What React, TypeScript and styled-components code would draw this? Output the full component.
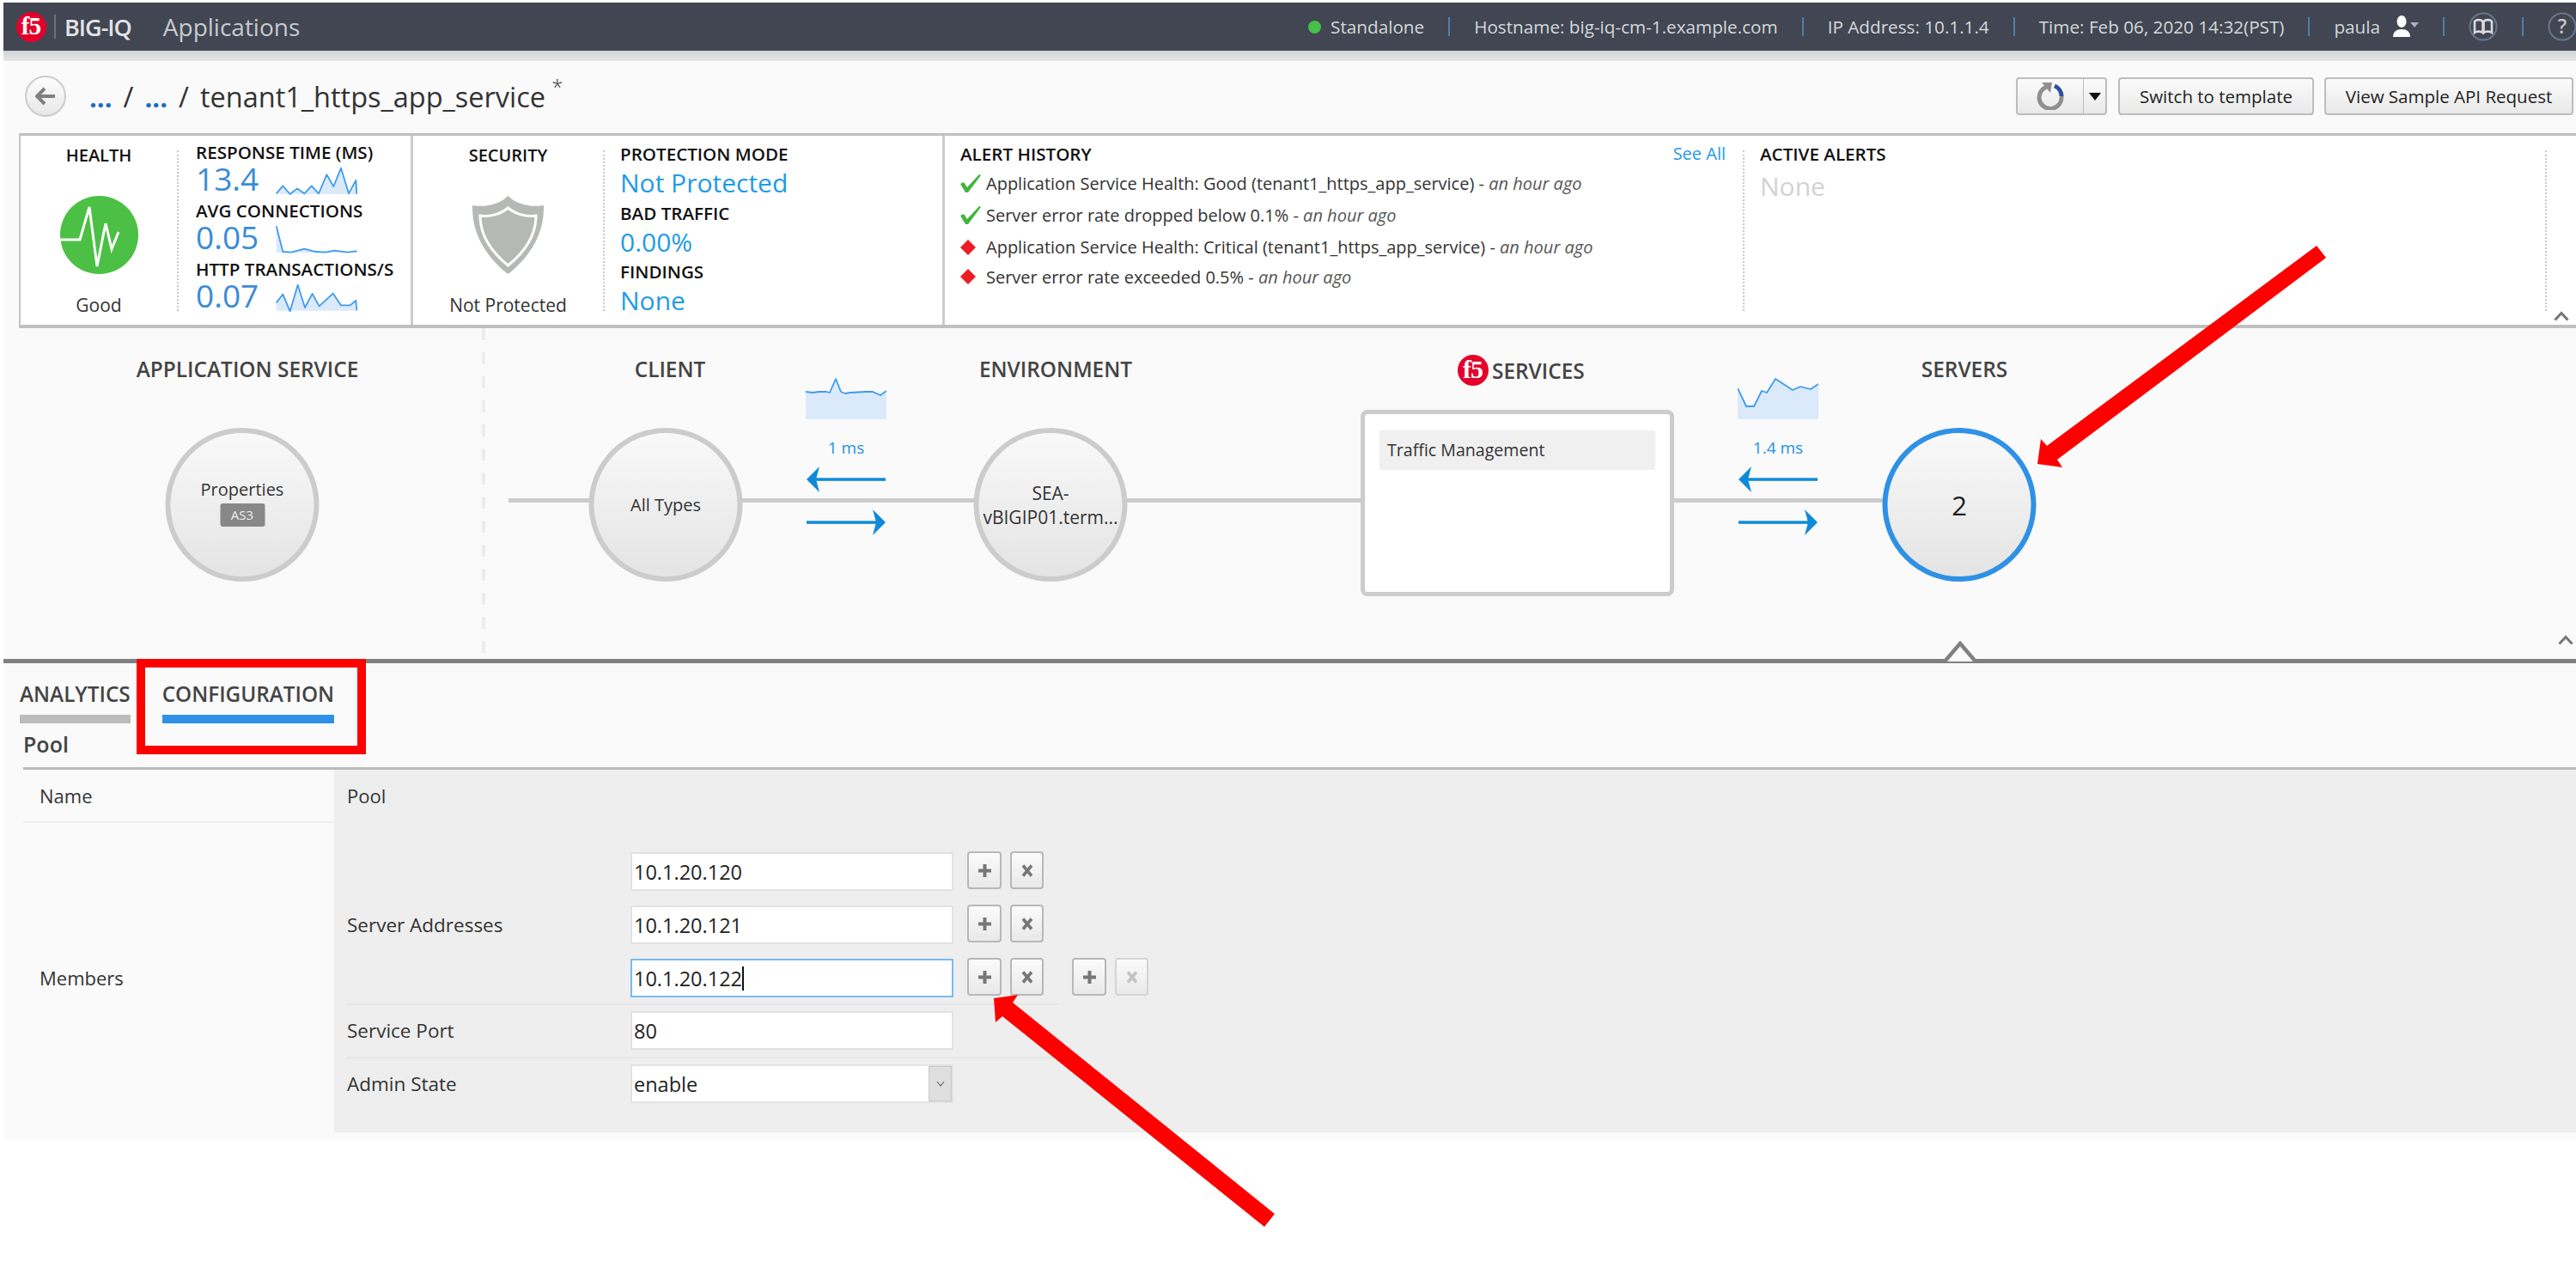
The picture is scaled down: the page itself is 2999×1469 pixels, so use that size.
import React from 'react';
import styled, { createGlobalStyle } from 'styled-components';

const GlobalStyle = createGlobalStyle`
  html, body {
    margin: 0;
    padding: 0;
    background: #ffffff;
  }
  body {
    font-family: "Open Sans", "Liberation Sans", sans-serif;
    color: #333333;
  }
  * {
    box-sizing: border-box;
  }
`;

const toPath = (pts: number[][]) => pts.map((p) => p.join(',')).join(' ');

const Spark = ({
  points,
  width,
  height,
  box,
  base,
}: {
  points: number[][];
  width: number;
  height: number;
  box: string;
  base: number;
}) => {
  const first = points[0][0];
  const last = points[points.length - 1][0];
  const area = [[first, base], ...points, [last, base]];
  return (
    <svg width={width} height={height} viewBox={box} preserveAspectRatio="none">
      <polygon points={toPath(area)} fill="#dbeafb" />
      <polyline
        points={toPath(points)}
        fill="none"
        stroke="#3d9bf0"
        strokeWidth={1.8}
        vectorEffect="non-scaling-stroke"
        strokeLinejoin="round"
      />
    </svg>
  );
};

const F5Logo = ({ size }: { size: number }) => (
  <svg width={size} height={size} viewBox="0 0 36 36">
    <circle cx="18" cy="18" r="18" fill="#e4002b" />
    <text
      x="17.5"
      y="27"
      textAnchor="middle"
      fontFamily="Liberation Serif, serif"
      fontWeight="700"
      fontSize="30"
      letterSpacing="-1"
      fill="#ffffff"
    >
      f5
    </text>
  </svg>
);

const responseSpark = [[32,110],[55,83],[80,112],[105,92],[130,110],[155,83],[180,110],[208,43],[232,85],[258,20],[285,110],[310,63],[313,112]];
const connectionSpark = [[32,222],[55,312],[85,314],[130,302],[170,312],[205,314],[235,308],[280,314],[310,310],[313,312]];
const transactionSpark = [[32,488],[55,458],[80,518],[107,425],[132,505],[158,456],[182,500],[230,455],[258,497],[290,497],[310,480],[313,515]];
const clientSpark = [[0,16],[8,17],[16,16],[24,16],[28,17],[35,1],[41,16],[46,18],[52,17],[70,16],[78,16],[87,20],[94,15]];
const serverSpark = [[0,12],[10,33],[19,33],[28,15],[34,17],[44,1],[64,14],[73,10],[85,13],[94,7]];

const metrics = [
  { label: 'RESPONSE TIME (MS)', value: '13.4', points: responseSpark, box: '30 15 285 100', base: 112 },
  { label: 'AVG CONNECTIONS', value: '0.05', points: connectionSpark, box: '30 218 285 100', base: 316 },
  { label: 'HTTP TRANSACTIONS/S', value: '0.07', points: transactionSpark, box: '30 420 285 100', base: 516 },
];

const protection = [
  { label: 'PROTECTION MODE', value: 'Not Protected' },
  { label: 'BAD TRAFFIC', value: '0.00%' },
  { label: 'FINDINGS', value: 'None' },
];

const alerts = [
  { ok: true, text: 'Application Service Health: Good (tenant1_https_app_service)' },
  { ok: true, text: 'Server error rate dropped below 0.1%' },
  { ok: false, text: 'Application Service Health: Critical (tenant1_https_app_service)' },
  { ok: false, text: 'Server error rate exceeded 0.5%' },
];

const PlusIcon = ({ faded }: { faded?: boolean }) => (
  <svg width="17" height="17" viewBox="0 0 17 17">
    <path d="M8.5 1v15M1 8.5h15" stroke={faded ? '#c4c4c4' : '#777777'} strokeWidth="4" />
  </svg>
);

const CrossIcon = ({ faded }: { faded?: boolean }) => (
  <svg width="14" height="15" viewBox="0 0 14 15">
    <path d="M2 1.5l10 12M12 1.5l-10 12" stroke={faded ? '#c4c4c4' : '#777777'} strokeWidth="3.6" />
  </svg>
);

const ArrowRow = () => (
  <ArrowStack>
    <svg width="92" height="32" viewBox="0 0 92 32">
      <path d="M0 16L15 1L11 16L15 31Z" fill="#0f8ad9" />
      <rect x="8" y="14.300" width="84" height="3.500" fill="#0f8ad9" />
    </svg>
    <svg width="92" height="32" viewBox="0 0 92 32">
      <path d="M92 16L77 1L81 16L77 31Z" fill="#0f8ad9" />
      <rect x="0" y="14.300" width="84" height="3.500" fill="#0f8ad9" />
    </svg>
  </ArrowStack>
);

const App = () => (
  <Page>
    <GlobalStyle />
    <NavBar>
      <LogoSlot>
        <F5Logo size={35} />
      </LogoSlot>
      <LogoRule />
      <Brand>BIG-IQ</Brand>
      <Section>Applications</Section>
      <NavRight>
        <StatusDot />
        <NavText>Standalone</NavText>
        <NavRule />
        <NavText>Hostname: big-iq-cm-1.example.com</NavText>
        <NavRule />
        <NavText>IP Address: 10.1.1.4</NavText>
        <NavRule />
        <NavText>Time: Feb 06, 2020 14:32(PST)</NavText>
        <NavRule />
        <NavText>paula</NavText>
        <UserSlot>
          <svg width="30" height="28" viewBox="0 0 30 28">
            <ellipse cx="10" cy="8" rx="5.5" ry="7" fill="#ffffff" />
            <path d="M0 26c0-6 4-9 10-9s10 3 10 9z" fill="#ffffff" />
            <path d="M20 9h10l-5 6z" fill="#aab0b8" />
          </svg>
        </UserSlot>
        <NavRule />
        <IconSlot>
          <svg width="34" height="34" viewBox="0 0 34 34">
            <circle cx="17" cy="17" r="15.5" fill="none" stroke="#66778c" strokeWidth="2" />
            <path
              d="M7 24V11c2-2.500 7-2.500 9.500 0v13c-2.500-1.800-7-1.800-9.500 0zM27 24V11c-2-2.500-7-2.500-9.500 0v13c2.500-1.800 7-1.800 9.500 0z"
              fill="none"
              stroke="#d8dadd"
              strokeWidth="2.600"
            />
          </svg>
        </IconSlot>
        <NavRule />
        <IconSlot>
          <svg width="34" height="34" viewBox="0 0 34 34">
            <circle cx="17" cy="17" r="15.500" fill="none" stroke="#66778c" strokeWidth="2" />
            <text x="17" y="25" textAnchor="middle" fontFamily="Open Sans, sans-serif" fontWeight="600" fontSize="23" fill="#c4c8cd">
              ?
            </text>
          </svg>
        </IconSlot>
      </NavRight>
    </NavBar>
    <NavShade />
    <Main>
      <Toolbar>
        <BackButton>
          <svg width="24" height="22" viewBox="0 0 24 22">
            <path d="M11 2L2 11l9 9M3 11h20" fill="none" stroke="#808080" strokeWidth="4" />
          </svg>
        </BackButton>
        <Crumbs>
          <CrumbLink>...</CrumbLink>
          <CrumbSlash>/</CrumbSlash>
          <CrumbLink>...</CrumbLink>
          <CrumbSlash>/</CrumbSlash>
          <span>tenant1_https_app_service</span>
          <Star>*</Star>
        </Crumbs>
        <ToolbarActions>
          <SplitButton>
            <SplitMain>
              <svg width="32" height="32" viewBox="0 0 32 32">
                <path d="M11 5.500A13 13 0 1 0 29 16" fill="none" stroke="#8f8f8f" strokeWidth="5" />
                <path d="M21 4A13 13 0 0 1 29 16" fill="none" stroke="#2d4da0" strokeWidth="5" />
                <path d="M6 0h12l-2 12z" fill="#8f8f8f" />
              </svg>
            </SplitMain>
            <SplitCaret>
              <svg width="14" height="9" viewBox="0 0 14 9">
                <path d="M0 0h14L7 9z" fill="#111111" />
              </svg>
            </SplitCaret>
          </SplitButton>
          <ToolButton $width={228}>Switch to template</ToolButton>
          <ToolButton $width={290}>View Sample API Request</ToolButton>
        </ToolbarActions>
      </Toolbar>

      <SummaryCard>
        <HealthPanel>
          <PanelTitle>HEALTH</PanelTitle>
          <StatusGraphic>
            <svg width="91" height="91" viewBox="0 0 91 91">
              <circle cx="45.500" cy="45.500" r="45.500" fill="#4bc044" />
              <polyline
                points="0,51 23,51 34,13 43,82 53,32 60,62 68,42"
                fill="none"
                stroke="#ffffff"
                strokeWidth="3"
              />
            </svg>
          </StatusGraphic>
          <PanelFoot>Good</PanelFoot>
        </HealthPanel>
        <DottedRule />
        <MetricPanel>
          {metrics.map((m) => (
            <Metric key={m.label}>
              <MetricLabel>{m.label}</MetricLabel>
              <MetricRow>
                <MetricValue>{m.value}</MetricValue>
                <Spark points={m.points} box={m.box} base={m.base} width={95} height={33} />
              </MetricRow>
            </Metric>
          ))}
        </MetricPanel>
        <SecurityPanel>
          <PanelTitle>SECURITY</PanelTitle>
          <StatusGraphic>
            <svg width="83" height="91" viewBox="0 0 83 91">
              <path
                d="M41.500 0C50 9 68 14 83 11C84 45 66 72 41.500 91C17 72 -1 45 0 11C15 14 33 9 41.500 0Z"
                fill="#b4b9b6"
              />
              <path
                d="M41.500 14C50 21 63 25 74 23C74 47 60 66 41.500 81C23 66 9 47 9 23C20 25 33 21 41.500 14Z"
                fill="none"
                stroke="#ffffff"
                strokeWidth="3"
              />
            </svg>
          </StatusGraphic>
          <PanelFoot>Not Protected</PanelFoot>
        </SecurityPanel>
        <DottedRule />
        <ProtectionPanel>
          {protection.map((p) => (
            <ProtectionItem key={p.label}>
              <MetricLabel>{p.label}</MetricLabel>
              <ProtectionValue>{p.value}</ProtectionValue>
            </ProtectionItem>
          ))}
        </ProtectionPanel>
        <AlertPanel>
          <AlertHead>
            <MetricLabel>ALERT HISTORY</MetricLabel>
            <SeeAll>See All</SeeAll>
          </AlertHead>
          {alerts.map((a) => (
            <AlertRow key={a.text}>
              <AlertIcon>
                {a.ok ? (
                  <svg width="24" height="21" viewBox="0 0 24 21">
                    <path d="M0 11l4-2 4 6L22 0l2 1L9 21h-3z" fill="#3fb53a" />
                  </svg>
                ) : (
                  <svg width="18" height="18" viewBox="0 0 18 18">
                    <path d="M9 0l9 9-9 9-9-9z" fill="#ee1c25" />
                  </svg>
                )}
              </AlertIcon>
              <span>
                {a.text} - <AlertTime>an hour ago</AlertTime>
              </span>
            </AlertRow>
          ))}
        </AlertPanel>
        <DottedRule />
        <ActivePanel>
          <MetricLabel>ACTIVE ALERTS</MetricLabel>
          <NoneValue>None</NoneValue>
        </ActivePanel>
        <DottedRule />
        <CollapseSlot>
          <svg width="18" height="12" viewBox="0 0 18 12">
            <path d="M1.500 10.500L9 2.500l7.500 8" fill="none" stroke="#777777" strokeWidth="3" />
          </svg>
        </CollapseSlot>
      </SummaryCard>

      <Canvas>
        <DashRule />
        <Wire />
        <StationTitle $x={284} $y={34}>APPLICATION SERVICE</StationTitle>
        <StationTitle $x={776} $y={34}>CLIENT</StationTitle>
        <StationTitle $x={1225} $y={34}>ENVIRONMENT</StationTitle>
        <ServicesTitle>
          <F5Logo size={36} />
          SERVICES
        </ServicesTitle>
        <StationTitle $x={2283} $y={34}>SERVERS</StationTitle>

        <Node $x={278}>
          <NodeText>Properties</NodeText>
          <Badge>AS3</Badge>
        </Node>
        <Node $x={771}>
          <NodeText>All Types</NodeText>
        </Node>
        <Node $x={1219}>
          <NodeText $size={21}>SEA-</NodeText>
          <NodeText $size={21}>vBIGIP01.term...</NodeText>
        </Node>
        <Node $x={2277} $active>
          <NodeCount>2</NodeCount>
        </Node>

        <ServiceBox>
          <ServiceItem>Traffic Management</ServiceItem>
        </ServiceBox>

        <Latency $x={934}>
          <Spark points={clientSpark} box="0 0 94 48" base={48} width={94} height={48} />
          <LatencyText>1 ms</LatencyText>
          <ArrowRow />
        </Latency>
        <Latency $x={2019}>
          <Spark points={serverSpark} box="0 0 94 48" base={48} width={94} height={48} />
          <LatencyText>1.4 ms</LatencyText>
          <ArrowRow />
        </Latency>

        <CanvasCollapse>
          <svg width="18" height="12" viewBox="0 0 18 12">
            <path d="M1.500 10.500L9 2.500l7.500 8" fill="none" stroke="#777777" strokeWidth="3" />
          </svg>
        </CanvasCollapse>
        <Notch>
          <svg width="40" height="26" viewBox="0 0 40 26">
            <path d="M2 24L20 3l18 21" fill="#fafafa" stroke="#808080" strokeWidth="4.500" />
          </svg>
        </Notch>
      </Canvas>

      <Tabs>
        <Tab>ANALYTICS</Tab>
        <Tab $active>CONFIGURATION</Tab>
      </Tabs>
      <PoolHeading>Pool</PoolHeading>
      <ConfigTable>
        <KeyCell $rule>Name</KeyCell>
        <NameValue>Pool</NameValue>
        <KeyCell>Members</KeyCell>
        <MemberFields>
          <FieldRow $rule $pad="34px 0 7px">
            <FieldLabel>Server Addresses</FieldLabel>
            <AddressList>
              <AddressRow>
                <Field>10.1.20.120</Field>
                <IconButton><PlusIcon /></IconButton>
                <IconButton $narrow><CrossIcon /></IconButton>
              </AddressRow>
              <AddressRow>
                <Field>10.1.20.121</Field>
                <IconButton><PlusIcon /></IconButton>
                <IconButton $narrow><CrossIcon /></IconButton>
              </AddressRow>
              <AddressRow>
                <Field $focused>
                  10.1.20.122
                  <Caret />
                </Field>
                <IconButton><PlusIcon /></IconButton>
                <IconButton $narrow><CrossIcon /></IconButton>
                <IconButton $spaced><PlusIcon /></IconButton>
                <IconButton $narrow $faded><CrossIcon faded /></IconButton>
              </AddressRow>
            </AddressList>
          </FieldRow>
          <FieldRow $rule $pad="7px 0 8px">
            <FieldLabel>Service Port</FieldLabel>
            <Field>80</Field>
          </FieldRow>
          <FieldRow $pad="7px 0 0">
            <FieldLabel>Admin State</FieldLabel>
            <Field>
              enable
              <SelectCaret>
                <svg width="10" height="7" viewBox="0 0 10 7">
                  <path d="M1 1l4 5 4-5" fill="none" stroke="#666666" strokeWidth="1.200" />
                </svg>
              </SelectCaret>
            </Field>
          </FieldRow>
        </MemberFields>
      </ConfigTable>
      <TableFoot />
    </Main>

    <Annotations width="2999" height="1469" viewBox="0 0 2999 1469">
      <rect x="164" y="772" width="257" height="101" fill="none" stroke="#ff0000" strokeWidth="10" />
      <polygon
        points="2697,286 2708,300 2395,535 2401,544 2372,540 2376,511 2383,519"
        fill="#ff0000"
      />
      <polygon
        points="1484,1413 1472,1428 1167,1183 1159,1190 1157,1162 1185,1158 1179,1167"
        fill="#ff0000"
      />
    </Annotations>
  </Page>
);

export default App;

const Page = styled.div`
  position: relative;
  width: 2999px;
  height: 1469px;
  overflow: hidden;
  padding: 3px 0 0 4px;
  background: #ffffff;
`;

const NavBar = styled.header`
  display: flex;
  align-items: center;
  height: 56px;
  background: #414652;
  color: #d5d8dc;
`;

const LogoSlot = styled.div`
  display: flex;
  margin: 0 0 0 15px;
`;

const LogoRule = styled.div`
  width: 2px;
  height: 28px;
  margin: 0 10px 0 9px;
  background: #6b707b;
`;

const Brand = styled.div`
  font-size: 27px;
  font-weight: 600;
  letter-spacing: -1px;
  color: #e2e4e7;
`;

const Section = styled.div`
  margin-left: 37px;
  font-size: 28px;
  color: #c6cad0;
`;

const NavRight = styled.div`
  display: flex;
  align-items: center;
  margin-left: auto;
  margin-right: -1px;
`;

const StatusDot = styled.span`
  width: 15px;
  height: 15px;
  margin-right: 11px;
  border-radius: 50%;
  background: #46c04a;
`;

const NavText = styled.span`
  font-size: 20.7px;
  color: #d5d8dc;
  white-space: nowrap;
`;

const NavRule = styled.span`
  width: 2px;
  height: 22px;
  margin: 0 28px;
  background: #4f7fa8;
`;

const UserSlot = styled.span`
  display: flex;
  margin-left: 15px;
`;

const IconSlot = styled.span`
  display: flex;
  width: 34px;
`;

const NavShade = styled.div`
  height: 12px;
  background: linear-gradient(#cfd2d3, #e6e7e7);
`;

const Main = styled.main`
  background: #fafafa;
`;

const Toolbar = styled.div`
  display: flex;
  align-items: center;
  height: 84px;
  padding: 0 3px 2px 25px;
`;

const BackButton = styled.button`
  display: flex;
  align-items: center;
  justify-content: center;
  width: 48px;
  height: 48px;
  padding: 0;
  border: 2px solid #cccccc;
  border-radius: 50%;
  background: linear-gradient(#fdfdfd, #e8e8e8);
`;

const Crumbs = styled.div`
  display: flex;
  align-items: baseline;
  margin-left: 27px;
  font-size: 32.5px;
  color: #333333;
  white-space: nowrap;
`;

const CrumbLink = styled.span`
  font-weight: 700;
  font-size: 31px;
  color: #1a6fc4;
`;

const CrumbSlash = styled.span`
  margin: 0 13px;
`;

const Star = styled.span`
  align-self: flex-start;
  margin: -4px 0 0 7px;
  font-size: 24px;
  font-weight: 300;
  line-height: 30px;
`;

const ToolbarActions = styled.div`
  display: flex;
  gap: 12px;
  margin-left: auto;
`;

const SplitButton = styled.div`
  display: flex;
  width: 106px;
  height: 44px;
  margin-right: 1px;
  border: 2px solid #bdbdbd;
  border-radius: 4px;
  background: linear-gradient(#fbfbfb, #e9e9e9);
`;

const SplitMain = styled.div`
  display: flex;
  flex: 1;
  align-items: center;
  justify-content: center;
`;

const SplitCaret = styled.div`
  display: flex;
  align-items: center;
  justify-content: center;
  width: 26px;
  border-left: 1px solid #bdbdbd;
`;

const ToolButton = styled.button<{ $width: number }>`
  width: ${({ $width }) => $width}px;
  height: 44px;
  padding: 0;
  border: 2px solid #bdbdbd;
  border-radius: 4px;
  background: linear-gradient(#fbfbfb, #e9e9e9);
  font-family: inherit;
  font-size: 20.5px;
  color: #222222;
`;

const SummaryCard = styled.section`
  display: flex;
  height: 227px;
  margin-left: 18px;
  border-top: 3px solid #bfbfbf;
  border-bottom: 4px solid #bfbfbf;
  border-left: 2px solid #c4c4c4;
  background: #ffffff;
`;

const HealthPanel = styled.div`
  display: flex;
  flex-direction: column;
  align-items: center;
  width: 182px;
  padding-top: 10px;
`;

const SecurityPanel = styled(HealthPanel)`
  width: 221px;
`;

const PanelTitle = styled.div`
  font-size: 20px;
  font-weight: 600;
  line-height: 26px;
  color: #111111;
`;

const StatusGraphic = styled.div`
  display: flex;
  margin: 34px 0 23px;
`;

const PanelFoot = styled.div`
  font-size: 21px;
  line-height: 26px;
  color: #333333;
`;

const DottedRule = styled.div`
  flex: none;
  width: 0;
  margin: 17px 0 16px;
  border-left: 2px dotted #c8c8c8;
`;

const MetricPanel = styled.div`
  display: flex;
  flex-direction: column;
  gap: 4px;
  width: 273px;
  padding: 7px 0 0 20px;
  border-right: 3px solid #cccccc;
`;

const Metric = styled.div`
  display: flex;
  flex-direction: column;
`;

const MetricLabel = styled.div`
  font-size: 20.6px;
  font-weight: 600;
  line-height: 24px;
  color: #111111;
  white-space: nowrap;
`;

const MetricRow = styled.div`
  display: flex;
  align-items: flex-end;
  height: 40px;
  padding-bottom: 2px;
`;

const MetricValue = styled.div`
  width: 93px;
  font-size: 37px;
  line-height: 38px;
  color: #3a8cd6;
`;

const ProtectionPanel = styled.div`
  width: 396px;
  padding: 9px 0 0 18px;
  border-right: 3px solid #cccccc;
`;

const ProtectionItem = styled.div`
  display: flex;
  flex-direction: column;
  height: 68.5px;
`;

const ProtectionValue = styled.div`
  font-size: 30px;
  line-height: 44px;
  color: #1e9be8;
`;

const AlertPanel = styled.div`
  width: 929px;
  padding: 9px 20px 0 18px;
`;

const AlertHead = styled.div`
  display: flex;
  justify-content: space-between;
  margin-bottom: 4px;
`;

const SeeAll = styled.a`
  font-size: 20px;
  line-height: 24px;
  color: #1e9be8;
`;

const AlertRow = styled.div`
  display: flex;
  align-items: center;
  height: 37px;
  font-size: 20px;
  color: #333333;
  white-space: nowrap;

  &:last-child {
    height: 32px;
  }
`;

const AlertIcon = styled.span`
  display: flex;
  flex: none;
  width: 30px;
`;

const AlertTime = styled.em`
  color: #555555;
`;

const ActivePanel = styled.div`
  width: 932px;
  padding: 9px 0 0 18px;
`;

const NoneValue = styled.div`
  margin-top: 5px;
  font-size: 30px;
  line-height: 42px;
  color: #d2d2d2;
`;

const CollapseSlot = styled.div`
  display: flex;
  flex: 1;
  align-items: flex-end;
  justify-content: center;
  padding-bottom: 4px;
`;

const Canvas = styled.section`
  position: relative;
  height: 390px;
  border-bottom: 5px solid #808080;
`;

const DashRule = styled.div`
  position: absolute;
  top: 0;
  bottom: 0;
  left: 557px;
  width: 4px;
  background: repeating-linear-gradient(#ececec 0 14px, transparent 14px 28px);
`;

const Wire = styled.div`
  position: absolute;
  top: 198px;
  left: 588px;
  width: 1600px;
  height: 5px;
  background: #cccccc;
`;

const StationTitle = styled.div<{ $x: number; $y: number }>`
  position: absolute;
  top: ${({ $y }) => $y}px;
  left: ${({ $x }) => $x}px;
  transform: translateX(-50%);
  font-size: 24.4px;
  font-weight: 600;
  line-height: 28px;
  color: #444444;
  white-space: nowrap;
`;

const ServicesTitle = styled.div`
  position: absolute;
  top: 31px;
  left: 1693px;
  display: flex;
  align-items: center;
  gap: 4px;
  font-size: 24.4px;
  font-weight: 600;
  color: #444444;
`;

const Node = styled.div<{ $x: number; $active?: boolean }>`
  position: absolute;
  top: 116px;
  left: ${({ $x }) => $x}px;
  display: flex;
  flex-direction: column;
  align-items: center;
  justify-content: center;
  width: 179px;
  height: 179px;
  transform: translateX(-50%);
  border: 6px solid ${({ $active }) => ($active ? '#2f91e5' : '#cccccc')};
  border-radius: 50%;
  background: linear-gradient(#f9f9f9, #e4e4e4);
`;

const NodeText = styled.div<{ $size?: number }>`
  font-size: ${({ $size }) => $size ?? 20}px;
  line-height: 28px;
  color: #333333;
  white-space: nowrap;
`;

const NodeCount = styled.div`
  font-size: 31px;
  color: #222222;
`;

const Badge = styled.div`
  width: 52px;
  height: 27px;
  margin: 2px 0 6px;
  border-radius: 3px;
  background: #888888;
  font-size: 15px;
  line-height: 27px;
  text-align: center;
  color: #eeeeee;
`;

const ServiceBox = styled.div`
  position: absolute;
  top: 95px;
  left: 1580px;
  width: 365px;
  height: 217px;
  padding: 19px 17px;
  border: 5px solid #cccccc;
  border-radius: 8px;
  background: #ffffff;
`;

const ServiceItem = styled.div`
  height: 46px;
  padding-left: 9px;
  background: #f0f0f0;
  font-size: 19.6px;
  line-height: 46px;
  color: #333333;
`;

const Latency = styled.div<{ $x: number }>`
  position: absolute;
  top: 58px;
  left: ${({ $x }) => $x}px;
  display: flex;
  flex-direction: column;
  align-items: center;
  width: 94px;
`;

const LatencyText = styled.div`
  margin-top: 21px;
  font-size: 19px;
  line-height: 24px;
  color: #2391e6;
  white-space: nowrap;
`;

const ArrowStack = styled.div`
  display: flex;
  flex-direction: column;
  gap: 18px;
  margin-top: 9px;
`;

const CanvasCollapse = styled.div`
  position: absolute;
  top: 357px;
  left: 2974px;
  display: flex;
`;

const Notch = styled.div`
  position: absolute;
  right: 697px;
  bottom: -5px;
  display: flex;
`;

const Tabs = styled.div`
  display: flex;
  gap: 37px;
  padding: 23px 0 0 19px;
`;

const Tab = styled.div<{ $active?: boolean }>`
  height: 47px;
  border-bottom: 10px solid ${({ $active }) => ($active ? '#2f91e5' : '#bbbbbb')};
  font-size: 24.3px;
  font-weight: 600;
  line-height: 26px;
  color: #444444;
`;

const PoolHeading = styled.div`
  margin: 10px 0 13px 23px;
  font-size: 25px;
  font-weight: 600;
  line-height: 28px;
  color: #444444;
`;

const ConfigTable = styled.div`
  display: grid;
  grid-template-columns: 362px 1fr;
  grid-template-rows: 62px 360px;
  margin-left: 23px;
  border-top: 3px solid #bbbbbb;
`;

const KeyCell = styled.div<{ $rule?: boolean }>`
  display: flex;
  align-items: center;
  padding-left: 19px;
  border-bottom: ${({ $rule }) => ($rule ? '2px solid #eeeeee' : 'none')};
  font-size: 22px;
  color: #333333;
`;

const NameValue = styled.div`
  display: flex;
  align-items: center;
  padding: 0 0 2px 15px;
  background: #eeeeee;
  font-size: 22px;
  color: #333333;
`;

const MemberFields = styled.div`
  padding-left: 15px;
  background: #eeeeee;
`;

const FieldRow = styled.div<{ $rule?: boolean; $pad: string }>`
  display: flex;
  align-items: center;
  width: 828px;
  padding: ${({ $pad }) => $pad};
  border-bottom: 2px solid ${({ $rule }) => ($rule ? '#e6e6e6' : 'transparent')};
`;

const FieldLabel = styled.div`
  flex: none;
  width: 330px;
  font-size: 22.5px;
  color: #333333;
`;

const AddressList = styled.div`
  display: flex;
  flex-direction: column;
  gap: 17px;
`;

const AddressRow = styled.div`
  display: flex;
  align-items: flex-start;
  white-space: nowrap;
`;

const Field = styled.div<{ $focused?: boolean }>`
  position: relative;
  display: flex;
  flex: none;
  align-items: center;
  width: 376px;
  height: 45px;
  padding-left: 2px;
  border: 2px solid ${({ $focused }) => ($focused ? '#78baf5' : '#e2e2e2')};
  background: #ffffff;
  font-size: 23.5px;
  color: #222222;
`;

const Caret = styled.span`
  width: 1.5px;
  height: 28px;
  background: #111111;
`;

const SelectCaret = styled.span`
  position: absolute;
  top: 0;
  right: 0;
  bottom: 0;
  display: flex;
  align-items: center;
  justify-content: center;
  width: 27px;
  border: 1px solid #c9c9c9;
  background: #dfdfdf;
`;

const IconButton = styled.button<{ $narrow?: boolean; $spaced?: boolean; $faded?: boolean }>`
  display: flex;
  flex: none;
  align-items: center;
  justify-content: center;
  width: ${({ $narrow }) => ($narrow ? 39 : 40)}px;
  height: 44px;
  margin: -1px 0 0 ${({ $narrow, $spaced }) => ($spaced ? 33 : $narrow ? 10 : 16)}px;
  padding: 0;
  border: 2px solid ${({ $faded }) => ($faded ? '#d4d4d4' : '#b8b8b8')};
  border-radius: 4px;
  background: linear-gradient(#fbfbfb, #e9e9e9);
`;

const TableFoot = styled.div`
  height: 8px;
`;

const Annotations = styled.svg`
  position: absolute;
  top: 0;
  left: 0;
  pointer-events: none;
`;
